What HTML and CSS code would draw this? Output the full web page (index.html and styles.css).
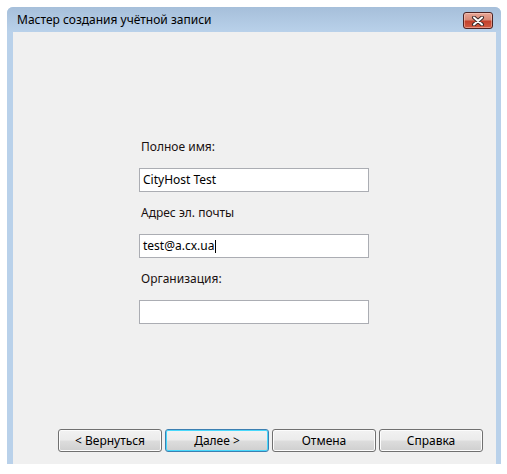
FILE: index.html
```html
<!DOCTYPE html>
<html lang="ru">
<head>
    <meta charset="UTF-8">
    <meta name="viewport" content="width=device-width, initial-scale=1.0">
    <title>Мастер создания учётной записи</title>
    <link rel="stylesheet" href="styles.css">
</head>
<body>
    <div class="window">
        <div class="titlebar">
            <span class="title">Мастер создания учётной записи</span>
            <button class="close-btn" title="Закрыть">
                <svg width="14" height="10" viewBox="0 0 14 10">
                    <path d="M3 1.5 L11 8.5 M11 1.5 L3 8.5" stroke="#3b2a2a" stroke-width="4" stroke-linecap="round"/>
                    <path d="M3 1.5 L11 8.5 M11 1.5 L3 8.5" stroke="#ffffff" stroke-width="2" stroke-linecap="round"/>
                </svg>
            </button>
        </div>

        <div class="content">
            <div class="form">
                <div class="field">
                    <div class="label">Полное имя:</div>
                    <div class="textbox"><span>CityHost Test</span></div>
                </div>
                <div class="field">
                    <div class="label">Адрес эл. почты</div>
                    <div class="textbox"><span>test@a.cx.ua</span><span class="caret"></span></div>
                </div>
                <div class="field">
                    <div class="label">Организация:</div>
                    <div class="textbox"></div>
                </div>
            </div>

            <div class="buttons">
                <button class="btn">&lt; Вернуться</button>
                <button class="btn btn-default">Далее &gt;</button>
                <button class="btn">Отмена</button>
                <button class="btn">Справка</button>
            </div>
        </div>
    </div>
</body>
</html>
```

FILE: styles.css
```css
body {
    margin: 0;
    background: #fff;
    font-family: "Noto Sans", "Open Sans", sans-serif;
    font-size: 12px;
    color: #000;
}

.window {
    width: 494px;
    margin: 7px 0 0 7px;
    background: #b9d1ea;
    border-radius: 6px 6px 0 0;
}

.titlebar {
    height: 25px;
    display: flex;
    align-items: flex-start;
    justify-content: space-between;
    padding: 0 8px 0 10px;
    border-radius: 6px 6px 0 0;
    background: linear-gradient(#a6bfda, #b9d1ea);
}

.title {
    line-height: 16px;
    margin-top: 5px;
    color: #000;
}

/* красная кнопка закрытия в заголовке */
.close-btn {
    width: 30px;
    height: 17px;
    margin-top: 5px;
    padding: 0;
    border: 1px solid #4d2323;
    border-radius: 3px;
    background: linear-gradient(#e8a696 0%, #d98a78 45%, #c3412c 55%, #d25c44 100%);
    box-shadow: inset 0 0 0 1px rgba(255, 220, 210, 0.45);
    display: flex;
    align-items: center;
    justify-content: center;
}

.content {
    margin: 0 5px 5px 6px;
    height: 432px;
    background: #f0f0f0;
    display: flex;
    flex-direction: column;
    justify-content: space-between;
}

.form {
    padding: 107px 0 0 126px;
    display: flex;
    flex-direction: column;
    gap: 13px;
}

.field {
    display: flex;
    flex-direction: column;
    gap: 13px;
}

.label {
    line-height: 16px;
    padding-left: 2px;
    color: #1a1010;
}

.textbox {
    width: 225px;
    height: 22px;
    border: 1px solid #abadb3;
    background: #fff;
    display: flex;
    align-items: center;
    padding-left: 3px;
    line-height: 16px;
}

.caret {
    display: inline-block;
    width: 1px;
    height: 13px;
    margin-left: 1px;
    background: #000;
}

.buttons {
    display: flex;
    gap: 3px;
    padding: 0 13px 12px 45px;
}

.btn {
    flex: 1;
    height: 23px;
    padding: 0;
    font-family: inherit;
    font-size: 12px;
    color: #000;
    border: 1px solid #707070;
    border-radius: 3px;
    background: linear-gradient(#f2f2f2 0%, #ebebeb 48%, #dddddd 52%, #cfcfcf 100%);
    box-shadow: inset 0 0 0 1px #fcfcfc;
}

/* кнопка по умолчанию — синяя рамка */
.btn-default {
    border-color: #3c7fb1;
    box-shadow: inset 0 0 0 1px #48d8fb;
}
```
